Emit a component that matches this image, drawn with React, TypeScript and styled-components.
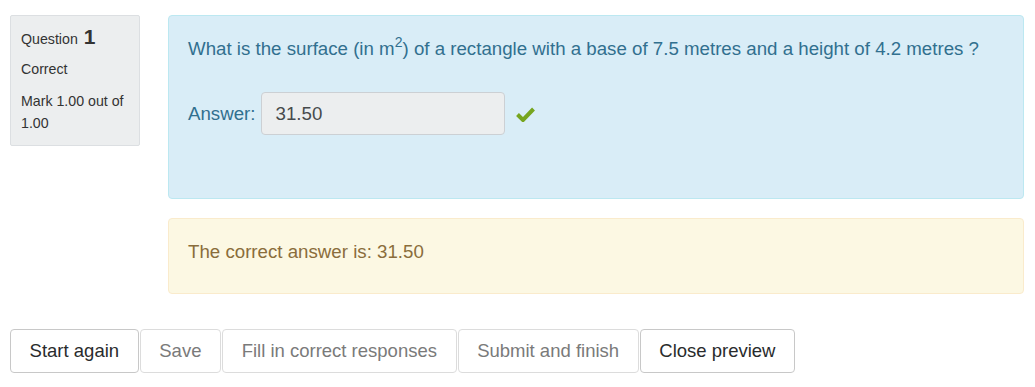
import React from "react";
import styled, { createGlobalStyle } from "styled-components";

const Global = createGlobalStyle`
  html, body { margin: 0; padding: 0; background: #fff; }
  body { font-family: "Liberation Sans", Arial, sans-serif; color: #333; }
`;

const Page = styled.div`
  padding: 15px 11px 0 10px;
`;

const QuestionRow = styled.div`
  display: flex;
  align-items: flex-start;
  gap: 28px;
`;

const Info = styled.div`
  width: 108px;
  flex: none;
  padding: 10px 10px 11px 10px;
  background: #eceeef;
  border: 1px solid #dcdfe2;
  border-radius: 2px;
  font-size: 14.2px;
  color: #333;
  line-height: 22px;
`;

const InfoTitle = styled.div`
  margin-bottom: 8px;
  b { font-size: 21px; font-weight: bold; margin-left: 2px; }
`;

const InfoLine = styled.div`
  margin-bottom: 10px;
  &:last-child { margin-bottom: 0; }
`;

const Content = styled.div`
  flex: 1;
  display: flex;
  flex-direction: column;
  gap: 19px;
`;

const Panel = styled.div<{ $tone: "info" | "warn" }>`
  border-radius: 4px;
  font-size: 18.7px;
  line-height: 28px;
  padding: ${(p) => (p.$tone === "info" ? "19px 20px 63px 19px" : "19px 20px 27px 19px")};
  background: ${(p) => (p.$tone === "info" ? "#d9edf7" : "#fcf8e3")};
  border: 1px solid ${(p) => (p.$tone === "info" ? "#bce8f1" : "#faebcc")};
  color: ${(p) => (p.$tone === "info" ? "#31708f" : "#8a6d3b")};
`;

const QText = styled.div`
  sup { font-size: 14px; line-height: 0; vertical-align: 8px; }
`;

const AnswerRow = styled.div`
  display: flex;
  align-items: center;
  margin-top: 29px;
`;

const AnswerLabel = styled.span`
  margin-right: 5px;
`;

const AnswerBox = styled.div`
  width: 221px;
  height: 41px;
  padding: 0 7px 0 14px;
  background: #eceeef;
  border: 1px solid #ccd0d4;
  border-radius: 4px;
  display: flex;
  align-items: center;
  color: #464a4c;
`;

const Check = styled.svg`
  margin-left: 11px;
  width: 19px;
  height: 16px;
`;

const Buttons = styled.div`
  display: flex;
  gap: 1px;
  margin-top: 35px;
`;

const Btn = styled.button<{ $disabled?: boolean }>`
  height: 44px;
  padding: 0 18.6px;
  font-family: "Liberation Sans", Arial, sans-serif;
  font-size: 18.5px;
  background: #fff;
  border: 1px solid ${(p) => (p.$disabled ? "#dcdcdc" : "#c8c8c8")};
  border-radius: 4px;
  color: ${(p) => (p.$disabled ? "#7a7a7a" : "#292b2c")};
  cursor: ${(p) => (p.$disabled ? "default" : "pointer")};
`;

export default function App() {
  return (
    <>
      <Global />
      <Page>
        <QuestionRow>
          <Info>
            <InfoTitle>
              Question <b>1</b>
            </InfoTitle>
            <InfoLine>Correct</InfoLine>
            <InfoLine>Mark 1.00 out of 1.00</InfoLine>
          </Info>
          <Content>
            <Panel $tone="info">
              <QText>
                What is the surface (in m<sup>2</sup>) of a rectangle with a base of 7.5 metres and a height of 4.2 metres ?
              </QText>
              <AnswerRow>
                <AnswerLabel>Answer:</AnswerLabel>
                <AnswerBox>31.50</AnswerBox>
                <Check viewBox="0 0 19 16">
                  <path d="M1.5 8.5 L7 14 L17.5 3" stroke="#76a51f" strokeWidth="4" fill="none" strokeLinejoin="miter" />
                </Check>
              </AnswerRow>
            </Panel>
            <Panel $tone="warn">The correct answer is: 31.50</Panel>
          </Content>
        </QuestionRow>
        <Buttons>
          <Btn>Start again</Btn>
          <Btn $disabled>Save</Btn>
          <Btn $disabled>Fill in correct responses</Btn>
          <Btn $disabled>Submit and finish</Btn>
          <Btn>Close preview</Btn>
        </Buttons>
      </Page>
    </>
  );
}
